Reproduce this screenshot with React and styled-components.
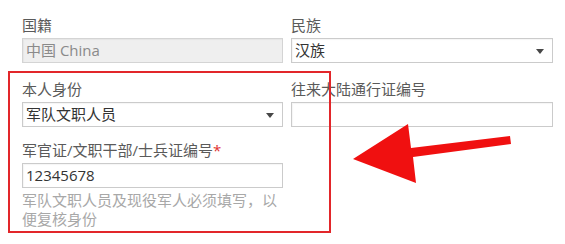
import React from "react";
import styled, { createGlobalStyle } from "styled-components";

const Global = createGlobalStyle`
  html, body { margin: 0; padding: 0; background: #fff; overflow: hidden; }
  * { box-sizing: border-box; }
`;

const Page = styled.div`
  position: relative;
  width: 565px;
  height: 244px;
  overflow: hidden;
  background: #fff;
  font-family: "Open Sans", "Noto Sans CJK SC", sans-serif;
  font-size: 15px;
`;

const Form = styled.div`
  display: grid;
  grid-template-columns: 261px 262px;
  column-gap: 8px;
  padding: 14px 0 0 22px;
  align-items: start;
`;

const Field = styled.div`
  display: flex;
  flex-direction: column;
  margin-top: ${(p) => p.$gap || 0}px;
`;

const Label = styled.div`
  height: 22px;
  line-height: 22px;
  color: #5a5a5a;
  white-space: nowrap;
`;

const Required = styled.span`
  color: #e03030;
`;

const Control = styled.div`
  position: relative;
  margin-top: 2px;
  height: 25px;
  line-height: 23px;
  padding: 0 3px;
  border: 1px solid ${(p) => (p.$disabled ? "#d4d4d4" : "#cbcbcb")};
  background: ${(p) => (p.$disabled ? "#efefef" : "#fff")};
  color: ${(p) => (p.$disabled ? "#8a8a8a" : "#333")};
  box-shadow: inset 1px 1px 1px rgba(0, 0, 0, 0.04);
  white-space: nowrap;
`;

const Caret = styled.span`
  position: absolute;
  right: 8px;
  top: 10px;
  width: 0;
  height: 0;
  border-left: 4px solid transparent;
  border-right: 4px solid transparent;
  border-top: 5px solid #474747;
`;

const Help = styled.div`
  margin-top: 3px;
  line-height: 19px;
  color: #a8a8a8;
`;

const RedBox = styled.div`
  position: absolute;
  left: 8px;
  top: 71px;
  width: 323px;
  height: 162px;
  border: 2px solid #e2262a;
  pointer-events: none;
`;

const ArrowSvg = styled.svg`
  position: absolute;
  left: 350px;
  top: 120px;
  pointer-events: none;
`;

function Select({ children }) {
  return (
    <Control>
      {children}
      <Caret />
    </Control>
  );
}

export default function App() {
  return (
    <>
      <Global />
      <Page>
        <Form>
          <Field>
            <Label>国籍</Label>
            <Control $disabled>中国 China</Control>
          </Field>
          <Field>
            <Label>民族</Label>
            <Select>汉族</Select>
          </Field>
          <Field $gap={15}>
            <Label>本人身份</Label>
            <Select>军队文职人员</Select>
          </Field>
          <Field $gap={15}>
            <Label>往来大陆通行证编号</Label>
            <Control />
          </Field>
          <Field $gap={12}>
            <Label>
              军官证/文职干部/士兵证编号<Required>*</Required>
            </Label>
            <Control>12345678</Control>
            <Help>军队文职人员及现役军人必须填写，以便复核身份</Help>
          </Field>
        </Form>
        <RedBox />
        <ArrowSvg width="165" height="66" viewBox="350 120 165 66">
          <polygon
            points="353,159 408,124 411,148 510,136 511,144 413,157 416,183"
            fill="#f01010"
          />
        </ArrowSvg>
      </Page>
    </>
  );
}
